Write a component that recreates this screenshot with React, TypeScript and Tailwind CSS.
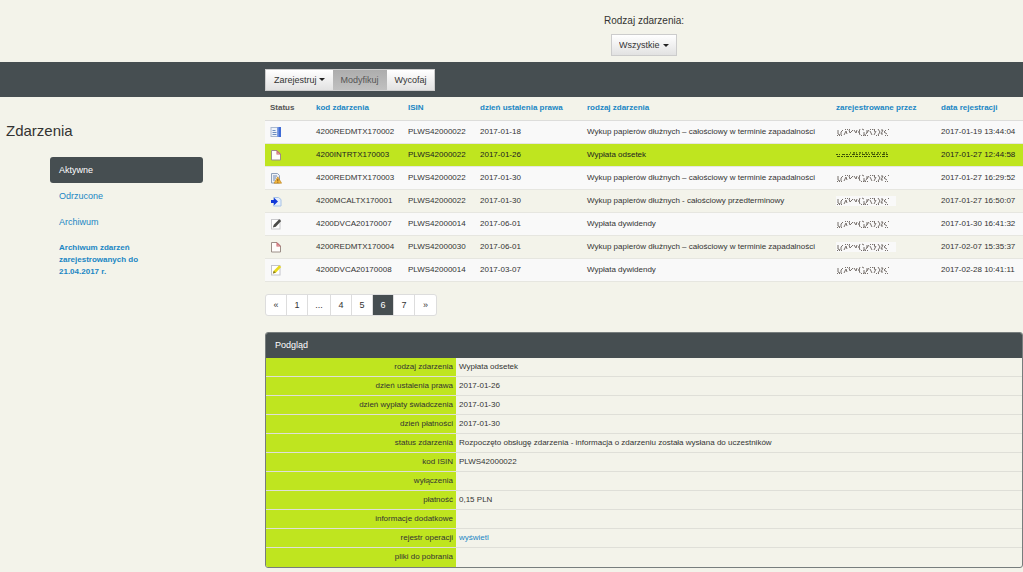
import type { ReactNode } from "react";

type Status = "report" | "blank" | "warning" | "arrow" | "pencil" | "draft";

interface EventRow {
  status: Status;
  label: string;
  code: string;
  isin: string;
  day: string;
  kind: string;
  registered: string;
  selected?: boolean;
}

const REDEMPTION = "Wykup papierów dłużnych – całościowy w terminie zapadalności";

const rows: EventRow[] = [
  { status: "report", label: "Raport", code: "4200REDMTX170002", isin: "PLWS42000022", day: "2017-01-18", kind: REDEMPTION, registered: "2017-01-19 13:44:04" },
  { status: "blank", label: "Nowe", code: "4200INTRTX170003", isin: "PLWS42000022", day: "2017-01-26", kind: "Wypłata odsetek", registered: "2017-01-27 12:44:58", selected: true },
  { status: "warning", label: "Ostrzeżenie", code: "4200REDMTX170003", isin: "PLWS42000022", day: "2017-01-30", kind: REDEMPTION, registered: "2017-01-27 16:29:52" },
  { status: "arrow", label: "Przekazane", code: "4200MCALTX170001", isin: "PLWS42000022", day: "2017-01-30", kind: "Wykup papierów dłużnych - całościowy przedterminowy", registered: "2017-01-27 16:50:07" },
  { status: "pencil", label: "Edycja", code: "4200DVCA20170007", isin: "PLWS42000014", day: "2017-06-01", kind: "Wypłata dywidendy", registered: "2017-01-30 16:41:32" },
  { status: "blank", label: "Nowe", code: "4200REDMTX170004", isin: "PLWS42000030", day: "2017-06-01", kind: REDEMPTION, registered: "2017-02-07 15:35:37" },
  { status: "draft", label: "Szkic", code: "4200DVCA20170008", isin: "PLWS42000014", day: "2017-03-07", kind: "Wypłata dywidendy", registered: "2017-02-28 10:41:11" },
];

const headings = ["kod zdarzenia", "ISIN", "dzień ustalenia prawa", "rodzaj zdarzenia", "zarejestrowane przez", "data rejestracji"];

const details: [string, ReactNode][] = [
  ["rodzaj zdarzenia", "Wypłata odsetek"],
  ["dzień ustalenia prawa", "2017-01-26"],
  ["dzień wypłaty świadczenia", "2017-01-30"],
  ["dzień płatności", "2017-01-30"],
  ["status zdarzenia", "Rozpoczęto obsługę zdarzenia - informacja o zdarzeniu została wysłana do uczestników"],
  ["kod ISIN", "PLWS42000022"],
  ["wyłączenia", ""],
  ["płatność", "0,15 PLN"],
  ["informacje dodatkowe", ""],
  ["rejestr operacji", <a href="#rejestr" className="text-[#1a86c4]">wyświetl</a>],
  ["pliki do pobrania", ""],
];

const pages = ["«", "1", "...", "4", "5", "6", "7", "»"];

function StatusIcon({ status, label }: { status: Status; label: string }) {
  return (
    <svg viewBox="0 0 12 12" className="block size-3" role="img" aria-label={label}>
      {status === "report" && (
        <>
          <rect x="1" y="1.5" width="6.5" height="9" fill="#eef3fa" stroke="#a9b8cf" />
          <path d="M2.5 4.5h3M2.5 6.5h4M2.5 8.5h4" stroke="#6f8fc0" />
          <rect x="7.5" y="1" width="3.5" height="10" fill="#3f6bd6" />
          <path d="M8 1v10" stroke="#8aa8ea" />
        </>
      )}
      {status === "blank" && (
        <>
          <path d="M1.5 1.5h5.5l3.5 3.5v6h-9z" fill="#fffdfb" stroke="#9c8f88" />
          <path d="M6.5 1 11 5.5H6.5z" fill="#c9626a" />
          <path d="M7.5 3.2 9 4.7H7.5z" fill="#f4d9d6" />
        </>
      )}
      {status === "warning" && (
        <>
          <path d="M1.5 1.5h6l2 2V11h-8z" fill="#eef2f8" stroke="#8fa0ba" />
          <path d="M3 4h4M3 6h3M3 8h2" stroke="#6f86ad" />
          <path d="M7.8 4.8 11.6 11.2H4z" fill="#f2b63c" stroke="#b97f1d" strokeWidth=".6" />
          <path d="M7.8 7v2.2M7.8 9.8v.8" stroke="#7a4a0c" strokeWidth=".9" />
        </>
      )}
      {status === "arrow" && (
        <>
          <path d="M3.5 2.5h5l2.5 2v6.5H3.5z" fill="#e6effb" stroke="#a8c3e6" />
          <path d="M1 5h3V2.8L8 6.5l-4 3.7V8H1z" fill="#1238d8" />
        </>
      )}
      {status === "pencil" && (
        <>
          <rect x="1.5" y="1.5" width="8.5" height="9.5" fill="#fff" stroke="#c9c9cc" />
          <path d="M2.8 9.6 3.8 6.8l5.4-5.6 2 1.9L5.8 8.7z" fill="#4a4a48" />
        </>
      )}
      {status === "draft" && (
        <>
          <rect x="1.5" y="1.5" width="8.5" height="9.5" fill="#fff" stroke="#c3c3cc" />
          <path d="M2.8 9.6 3.8 6.8l5.4-5.6 2 1.9L5.8 8.7z" fill="#e8d91c" />
          <path d="M2.8 9.6 3.8 6.8l2 1.9z" fill="#8a7a2a" />
        </>
      )}
    </svg>
  );
}

function HiddenName({ dark }: { dark?: boolean }) {
  return (
    <svg viewBox="0 0 60 10" className={`block h-[10px] w-[60px] ${dark ? "text-[#3d5205]" : "bg-[#f9f9f9] text-[#77706c]"}`} role="img" aria-label="Dane ukryte">
      {dark ? (
        <g fill="none" stroke="currentColor" strokeWidth="1.2">
          <path d="M0 4.5h52" strokeDasharray="2 1 1 2 3 1" />
          <path d="M1 6.5h51" strokeDasharray="3 1 2 1 1 1" />
          <path d="M14 2.8h38" strokeDasharray="1 2 2 1" />
        </g>
      ) : (
        <g fill="none" stroke="currentColor" strokeWidth="1">
          <path d="M2 3v4l2 1M5 8V5l2-2M8 8l2-4 1 3M13 3l1 3 3-3M18 3l2 3 1-3M22 5h2M24 2l-1 3 1 3M26 2l2 1M28 5v3h2M31 3v3M33 3l-3 4M34 4l2 4M38 2l1 3M40 4l-2 4M42 2l2 3-2 3M45 3h2l-2 4h2M50 3l-2 2 3 2M52 2l1 1" />
          <path d="M1 8.5h5M9 2.5h5M25 8.5h8M34 2.5h6M40 8.5h4M49 8.5h4" strokeDasharray="1 1" />
        </g>
      )}
    </svg>
  );
}

function Caret() {
  return (
    <svg viewBox="0 0 6 3" className="h-[3px] w-[6px]" aria-hidden="true">
      <path d="M0 0h6L3 3z" fill="#222" />
    </svg>
  );
}

export default function App() {
  return (
    <div className="min-h-screen overflow-x-hidden bg-[#f3f3ea] font-['Liberation_Sans',Arial,sans-serif] text-[9px] leading-3 text-[#333]">
      <header className="flex h-[62px] pl-[265px]">
        <div className="flex w-full flex-col items-center gap-[7px] pt-[14px]">
          <label htmlFor="kind" className="text-[10px] leading-[13px]">Rodzaj zdarzenia:</label>
          <div className="relative">
            <select id="kind" className="h-[22px] w-[66px] appearance-none border border-[#ccc] bg-linear-to-b from-white to-[#e2e2e2] pl-[7px] text-[9px]">
              <option>Wszystkie</option>
            </select>
            <span className="pointer-events-none absolute inset-y-0 right-2 flex items-center"><Caret /></span>
          </div>
        </div>
      </header>

      <nav className="flex h-[35px] items-center bg-[#464e51] pl-[265px]">
        <div className="flex h-[22px] border border-[#ccc]">
          <button type="button" className="flex items-center gap-[2px] bg-linear-to-b from-white to-[#e2e2e2] px-2">Zarejestruj <Caret /></button>
          <button type="button" className="bg-linear-to-b from-[#adadad] to-[#c0c0c0] px-2 text-[#555]">Modyfikuj</button>
          <button type="button" className="bg-linear-to-b from-white to-[#e2e2e2] px-2">Wycofaj</button>
        </div>
      </nav>

      <div className="flex">
        <aside className="w-[265px] shrink-0 pt-6">
          <h1 className="pl-[6px] text-[15px] leading-5">Zdarzenia</h1>
          <ul className="mt-4 mr-[62px] ml-[50px] flex flex-col">
            <li><a href="#aktywne" className="block rounded-[3px] bg-[#464e51] px-[9px] py-[7px] text-white">Aktywne</a></li>
            <li><a href="#odrzucone" className="block px-[9px] py-[7px] text-[#1a86c4]">Odrzucone</a></li>
            <li><a href="#archiwum" className="block px-[9px] py-[7px] text-[#1a86c4]">Archiwum</a></li>
            <li><a href="#archiwum-2017" className="block w-[110px] px-[9px] py-[7px] text-[8px] leading-3 font-bold text-[#1a86c4]">Archiwum zdarzeń zarejestrowanych do 21.04.2017 r.</a></li>
          </ul>
        </aside>

        <main className="min-w-0 flex-1">
          <table className="w-full table-fixed border-collapse text-[8px] leading-3 whitespace-nowrap">
            <colgroup>
              <col className="w-[46px]" />
              <col className="w-[92px]" />
              <col className="w-[72px]" />
              <col className="w-[107px]" />
              <col />
              <col className="w-[105px]" />
              <col className="w-[87px]" />
            </colgroup>
            <thead>
              <tr className="h-[23px] border-b border-[#dddddb] text-left">
                <th className="pl-[5px] text-[#555]">Status</th>
                {headings.map((h) => (
                  <th key={h} className="pl-[5px]"><a href="#sort" className="text-[#1a86c4]">{h}</a></th>
                ))}
              </tr>
            </thead>
            <tbody>
              {rows.map((r) => (
                <tr key={r.code} className={`h-[23px] border-b border-[#e6e6e0] ${r.selected ? "bg-[#bfe51f] text-[#222]" : "odd:bg-[#f9f9f9]"}`}>
                  <td className="pl-[5px]"><StatusIcon status={r.status} label={r.label} /></td>
                  <td className="pl-[5px]">{r.code}</td>
                  <td className="pl-[5px]">{r.isin}</td>
                  <td className="pl-[5px]">{r.day}</td>
                  <td className="pl-[5px]">{r.kind}</td>
                  <td className="pl-[5px]"><HiddenName dark={r.selected} /></td>
                  <td className="pl-[5px]">{r.registered}</td>
                </tr>
              ))}
            </tbody>
          </table>

          <nav aria-label="Strony" className="mt-3 flex">
            <div className="flex h-[22px] divide-x divide-[#ddd] overflow-hidden rounded-[3px] border border-[#ddd] bg-white">
              {pages.map((p) => (
                <a key={p} href="#strona" className={`flex items-center justify-center ${p === "..." ? "w-[23px]" : "w-[21px]"} ${p === "6" ? "bg-[#464e51] text-white" : ""}`}>{p}</a>
              ))}
            </div>
          </nav>

          <section className="mt-4 overflow-hidden rounded-[3px] border border-[#777d7d]">
            <h2 className="bg-[#464e51] px-[9px] py-[6px] leading-[13px] text-white">Podgląd</h2>
            <table className="w-full table-fixed border-collapse text-[8px] leading-3">
              <colgroup>
                <col className="w-[190px]" />
                <col />
              </colgroup>
              <tbody>
                {details.map(([name, value]) => (
                  <tr key={name} className="h-[19px] border-b border-[#dfdfd8] last:border-b-0">
                    <th scope="row" className="bg-[#bfe51f] pr-[3px] text-right font-normal">{name}</th>
                    <td className="pl-[3px]">{value}</td>
                  </tr>
                ))}
              </tbody>
            </table>
          </section>
        </main>
      </div>
    </div>
  );
}
